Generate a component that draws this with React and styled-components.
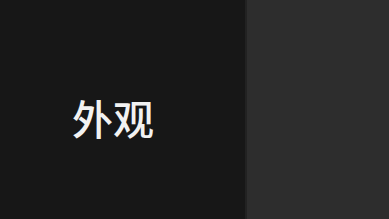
import React from "react";
import styled, { createGlobalStyle } from "styled-components";

const Global = createGlobalStyle`
  html, body { margin: 0; padding: 0; background: #2c2c2c; }
  #root { width: 389px; height: 219px; }
`;

const Screen = styled.div`
  display: flex;
  width: 389px;
  height: 219px;
  overflow: hidden;
`;

const Sidebar = styled.div`
  width: 245px;
  flex: none;
  background: #171717;
  display: flex;
  padding: 97px 0 0 72px;
  box-sizing: border-box;
`;

const Title = styled.div`
  font-family: "Noto Sans CJK SC", "Noto Sans", sans-serif;
  font-size: 41px;
  font-weight: 500;
  line-height: 1;
  color: #f2f2f2;
  letter-spacing: 0;
`;

const Pane = styled.div`
  flex: 1;
  background: #2d2d2d;
  border-left: 2px solid #222;
`;

export default function App() {
  return (
    <>
      <Global />
      <Screen>
        <Sidebar>
          <Title>外观</Title>
        </Sidebar>
        <Pane />
      </Screen>
    </>
  );
}
